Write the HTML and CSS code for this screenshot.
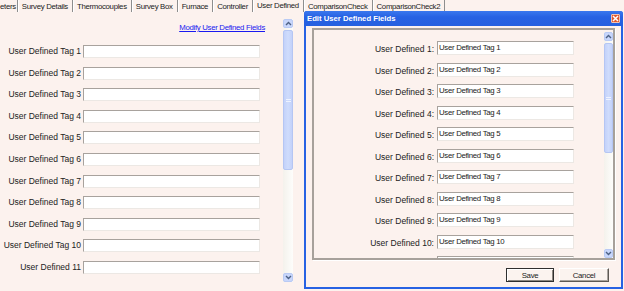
FILE: index.html
```html
<!DOCTYPE html>
<html>
<head>
<meta charset="utf-8">
<title>User Defined</title>
<link rel="stylesheet" href="styles.css">
</head>
<body>
<div class="tabs">
  <div class="tab first">eters</div>
  <div class="tab">Survey Details</div>
  <div class="tab">Thermocouples</div>
  <div class="tab">Survey Box</div>
  <div class="tab">Furnace</div>
  <div class="tab">Controller</div>
  <div class="tab active">User Defined</div>
  <div class="tab">ComparisonCheck</div>
  <div class="tab last">ComparisonCheck2</div>
</div>

<div class="page">
  <div class="form-area">
    <div class="link-row"><a class="link" href="#">Modify User Defined Fields</a></div>
    <div class="form-grid">
      <div class="lbl">User Defined Tag 1</div><div class="field"></div>
      <div class="lbl">User Defined Tag 2</div><div class="field"></div>
      <div class="lbl">User Defined Tag 3</div><div class="field"></div>
      <div class="lbl">User Defined Tag 4</div><div class="field"></div>
      <div class="lbl">User Defined Tag 5</div><div class="field"></div>
      <div class="lbl">User Defined Tag 6</div><div class="field"></div>
      <div class="lbl">User Defined Tag 7</div><div class="field"></div>
      <div class="lbl">User Defined Tag 8</div><div class="field"></div>
      <div class="lbl">User Defined Tag 9</div><div class="field"></div>
      <div class="lbl">User Defined Tag 10</div><div class="field"></div>
      <div class="lbl">User Defined 11</div><div class="field"></div>
    </div>
  </div>
  <div class="vscroll main-scroll">
    <div class="arrow"><svg width="7" height="5" viewBox="0 0 7 5"><polyline points="1,4 3.5,1.5 6,4" fill="none" stroke="#4d6185" stroke-width="1.4"/></svg></div>
    <div class="thumb main-thumb"><svg width="5" height="5" viewBox="0 0 5 5"><path d="M0 1.5h5M0 3.5h5" stroke="#eef3ff" stroke-width="1"/></svg></div>
    <div class="track"></div>
    <div class="arrow"><svg width="7" height="5" viewBox="0 0 7 5"><polyline points="1,1 3.5,3.5 6,1" fill="none" stroke="#4d6185" stroke-width="1.4"/></svg></div>
  </div>
</div>

<div class="dialog">
  <div class="titlebar">
    <span class="title">Edit User Defined Fields</span>
    <span class="close"><svg width="7" height="7" viewBox="0 0 7 7"><path d="M1 1L6 6M6 1L1 6" stroke="#fff" stroke-width="1.5"/></svg></span>
  </div>
  <div class="dlg-body">
    <div class="group">
      <div class="dlg-grid">
        <div class="dlbl">User Defined 1:</div><div class="dfield">User Defined Tag 1</div>
        <div class="dlbl">User Defined 2:</div><div class="dfield">User Defined Tag 2</div>
        <div class="dlbl">User Defined 3:</div><div class="dfield">User Defined Tag 3</div>
        <div class="dlbl">User Defined 4:</div><div class="dfield">User Defined Tag 4</div>
        <div class="dlbl">User Defined 5:</div><div class="dfield">User Defined Tag 5</div>
        <div class="dlbl">User Defined 6:</div><div class="dfield">User Defined Tag 6</div>
        <div class="dlbl">User Defined 7:</div><div class="dfield">User Defined Tag 7</div>
        <div class="dlbl">User Defined 8:</div><div class="dfield">User Defined Tag 8</div>
        <div class="dlbl">User Defined 9:</div><div class="dfield">User Defined Tag 9</div>
        <div class="dlbl">User Defined 10:</div><div class="dfield">User Defined Tag 10</div>
        <div class="dlbl">User Defined 11:</div><div class="dfield">User Defined 11</div>
      </div>
      <div class="vscroll dlg-scroll">
        <div class="arrow"><svg width="7" height="5" viewBox="0 0 7 5"><polyline points="1,4 3.5,1.5 6,4" fill="none" stroke="#4d6185" stroke-width="1.4"/></svg></div>
        <div class="thumb dlg-thumb"><svg width="5" height="5" viewBox="0 0 5 5"><path d="M0 1.5h5M0 3.5h5" stroke="#eef3ff" stroke-width="1"/></svg></div>
        <div class="track"></div>
        <div class="arrow"><svg width="7" height="5" viewBox="0 0 7 5"><polyline points="1,1 3.5,3.5 6,1" fill="none" stroke="#4d6185" stroke-width="1.4"/></svg></div>
      </div>
    </div>
    <div class="buttons">
      <button class="btn btn-default">Save</button>
      <button class="btn btn-cancel">Cancel</button>
    </div>
  </div>
</div>
</body>
</html>
```

FILE: styles.css
```css
* { box-sizing: border-box; }

body {
  margin: 0;
  width: 624px;
  height: 291px;
  overflow: hidden;
  background: #fcf2ee;
  color: #222;
  font-family: "Liberation Sans", Arial, sans-serif;
  font-size: 8.5px;
  position: relative;
}

.tabs {
  display: flex;
  height: 12px;
  font-size: 7.8px;
  letter-spacing: -0.3px;
  line-height: 10px;
  white-space: nowrap;
}

.tab {
  padding: 2px 4px 0 4px;
  border-left: 1px solid #8e8e8e;
  box-shadow: inset 1px 0 0 #ffffff;
  height: 12px;
}

.tab.first {
  border-left: none;
  box-shadow: none;
  padding-left: 0;
  padding-right: 1px;
}

.tab.active {
  padding-top: 1px;
}

.tab.last {
  border-right: 1px solid #8e8e8e;
}

.page {
  display: flex;
  height: 279px;
}

.form-area {
  width: 283px;
  height: 270px;
  overflow: hidden;
}

.link-row {
  display: flex;
  justify-content: flex-end;
  padding: 11px 18px 0 0;
  height: 21px;
}

.link {
  font-size: 7.8px;
  letter-spacing: -0.3px;
  line-height: 10px;
  color: #1a1af0;
  text-decoration: underline;
}

.form-grid {
  display: grid;
  grid-template-columns: 81px 177px;
  grid-auto-rows: 13px;
  column-gap: 2px;
  row-gap: 8.6px;
  margin-top: 12px;
}

.lbl {
  text-align: right;
  line-height: 13px;
  white-space: nowrap;
}

.field {
  background: #ffffff;
  border: 1px solid;
  border-color: #a8a29d #ece8e4 #ece8e4 #a8a29d;
}

/* scrollbars */
.vscroll {
  display: flex;
  flex-direction: column;
  background: linear-gradient(to right, #f4f2ec, #fdfdfb);
}

.main-scroll {
  width: 10px;
  margin-top: 7px;
  height: 263px;
}

.arrow {
  height: 9px;
  flex: none;
  display: flex;
  align-items: center;
  justify-content: center;
  background: #c8d6fb;
  border: 1px solid #b9caf4;
  border-radius: 2px;
}

.thumb {
  flex: none;
  display: flex;
  align-items: center;
  justify-content: center;
  background: linear-gradient(to right, #c3d2fa, #cfdcfc, #c3d2fa);
  border: 1px solid #b5c6f3;
  border-radius: 2px;
  margin-top: 2px;
}

.main-thumb { height: 140px; }

.track { flex: 1; }

/* dialog */
.dialog {
  position: absolute;
  left: 304px;
  top: 11px;
  width: 319px;
  height: 278px;
  background: #2762e3;
  border-radius: 3px 3px 0 0;
  padding: 0 2px 2px 2px;
  display: flex;
  flex-direction: column;
}

.titlebar {
  height: 15px;
  margin: 0 -2px;
  padding: 0 3px 0 3px;
  display: flex;
  align-items: center;
  justify-content: space-between;
  color: #ffffff;
  font-weight: bold;
  font-size: 7.7px;
  background: linear-gradient(#3a78ee, #2762e3 40%, #2560e0);
  border-radius: 3px 3px 0 0;
}

.close {
  width: 9px;
  height: 9px;
  display: flex;
  align-items: center;
  justify-content: center;
  background: #e0582f;
  border: 1px solid #f4c2ae;
  border-radius: 1px;
}

.dlg-body {
  flex: 1;
  background: #fcf2ee;
  padding: 2px 6px 0 6px;
  display: flex;
  flex-direction: column;
}

.group {
  height: 232px;
  border: 2px solid #a7a19b;
  box-shadow: 1px 1px 0 #ffffff;
  display: flex;
  overflow: hidden;
}

.dlg-grid {
  flex: 1;
  display: grid;
  grid-template-columns: 120px 137px;
  grid-auto-rows: 14px;
  column-gap: 3px;
  row-gap: 7.56px;
  align-content: start;
  padding-top: 11px;
}

.dlbl {
  text-align: right;
  line-height: 17px;
  white-space: nowrap;
}

.dfield {
  background: #ffffff;
  border: 1px solid;
  border-color: #a8a29d #ece8e4 #ece8e4 #a8a29d;
  padding: 1px 0 0 1px;
  font-size: 7.8px;
  letter-spacing: -0.3px;
  line-height: 10px;
  white-space: nowrap;
  overflow: hidden;
}

.dlg-scroll {
  width: 9px;
  margin-top: 2px;
}

.dlg-thumb { height: 110px; }

.buttons {
  display: flex;
  justify-content: flex-end;
  gap: 5px;
  padding: 8px 6px 0 0;
}

.btn {
  height: 14px;
  padding: 0;
  font-family: "Liberation Sans", Arial, sans-serif;
  font-size: 7.8px;
  letter-spacing: -0.3px;
  color: #222;
  background: #fbf3ef;
  border: 1px solid;
}

.btn-default {
  width: 48px;
  border-color: #2f2f2f;
  box-shadow: inset 1px 1px 0 #ffffff, inset -1px -1px 0 #8c8782;
}

.btn-cancel {
  width: 50px;
  border-color: #ffffff #5e5954 #5e5954 #ffffff;
  box-shadow: inset -1px -1px 0 #a9a39e;
}
```
